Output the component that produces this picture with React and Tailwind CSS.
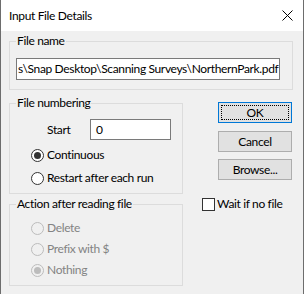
import React from 'react';

const font = { fontFamily: '"Segoe UI", Lato, "Noto Sans", sans-serif' };

const Radio = ({ label, checked, disabled }) => (
    <div className="flex items-center h-[20px]">
        <span
            className={`w-[13px] h-[13px] rounded-full border flex items-center justify-center ${
                disabled ? 'border-[#bcbcbc] bg-[#f0f0f0]' : 'border-[#333333] bg-white'
            }`}
        >
            {checked && (
                <span className={`w-[7px] h-[7px] rounded-full ${disabled ? 'bg-[#bcbcbc]' : 'bg-[#333333]'}`} />
            )}
        </span>
        <span className={`ml-[3px] ${disabled ? 'text-[#838383]' : 'text-black'}`}>{label}</span>
    </div>
);

const Group = ({ title, className, children }) => (
    <fieldset className={`border border-[#dcdcdc] pl-[6px] ${className}`}>
        <legend className="px-[1px] leading-[16px]">{title}</legend>
        {children}
    </fieldset>
);

const Button = ({ children, focused, className }) => (
    <div
        className={`relative w-[74px] h-[21px] flex items-center justify-center bg-[#e1e1e1] border ${
            focused ? 'border-[#0078d7]' : 'border-[#adadad]'
        } ${className}`}
    >
        {focused && <span className="absolute inset-[2px] border border-dotted border-black" />}
        {children}
    </div>
);

export default function App() {
    return (
        <div
            className="w-[304px] h-[294px] bg-[#f0f0f0] border-x border-[#6d6d6d] text-[12px] leading-[16px] tracking-[-0.35px] text-black"
            style={font}
        >
            <div className="h-[31px] bg-white flex items-center justify-between pl-[8px] pr-[10px]">
                <span>Input File Details</span>
                <svg width="11" height="11" viewBox="0 0 11 11" className="mt-[-1px]">
                    <path d="M0.5 0.5 L10.5 10.5 M10.5 0.5 L0.5 10.5" stroke="#000" strokeWidth="1" />
                </svg>
            </div>

            <div className="pl-[8px]">
                <Group title="File name" className="mt-[2px] w-[284px] pb-[9px]">
                    <div className="mt-[9px] w-[264px] h-[22px] bg-white border border-[#7a7a7a] flex items-center pl-[1px] overflow-hidden whitespace-nowrap">
                        s\Snap Desktop\Scanning Surveys\NorthernPark.pdf
                    </div>
                </Group>

                <div className="flex items-start">
                    <div className="w-[174px]">
                        <Group title="File numbering" className="mt-[5px] pb-[5px]">
                            <div className="mt-[8px] flex items-center ml-[31px]">
                                <span className="w-[43px]">Start</span>
                                <div className="w-[81px] h-[21px] bg-white border border-[#7a7a7a] flex items-center pl-[5px]">
                                    0
                                </div>
                            </div>
                            <div className="ml-[15px] mt-[5px] flex flex-col gap-[3px]">
                                <Radio label="Continuous" checked />
                                <Radio label="Restart after each run" />
                            </div>
                        </Group>

                        <Group title="Action after reading file" className="mt-[2px] pb-[5px]">
                            <div className="ml-[15px] mt-[6px] flex flex-col gap-[1px]">
                                <Radio label="Delete" disabled />
                                <Radio label="Prefix with $" disabled />
                                <Radio label="Nothing" checked disabled />
                            </div>
                        </Group>
                    </div>

                    <div className="pt-[12px] pl-[35px] flex flex-col">
                        <Button focused>OK</Button>
                        <Button className="mt-[8px]">Cancel</Button>
                        <Button className="mt-[7px]">Browse...</Button>
                        <div className="mt-[16px] ml-[-16px] flex items-center">
                            <span className="w-[13px] h-[13px] bg-white border border-[#333333]" />
                            <span className="ml-[2px]">Wait if no file</span>
                        </div>
                    </div>
                </div>
            </div>
        </div>
    );
}
